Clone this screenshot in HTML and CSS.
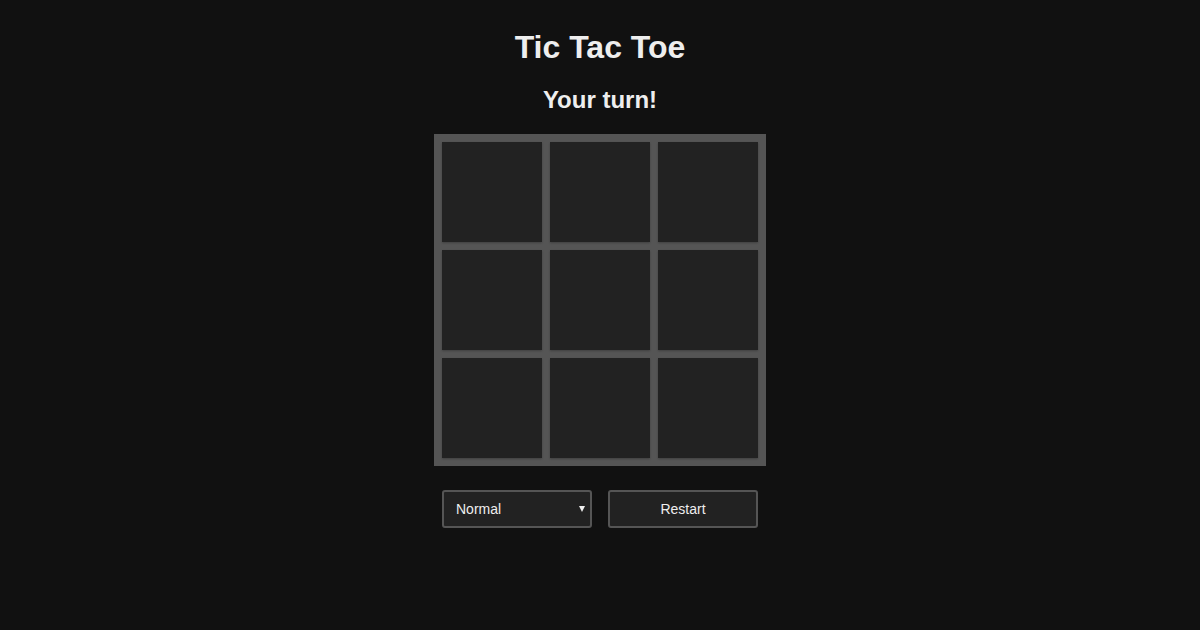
FILE: index.html
```html
<!DOCTYPE html>
<html lang="en">
<head>
<meta charset="utf-8">
<title>Tic Tac Toe</title>
<link rel="stylesheet" href="styles.css">
</head>
<body>
<main class="app">
  <h1 class="title">Tic Tac Toe</h1>
  <h2 class="status">Your turn!</h2>
  <div class="board">
    <button class="cell"></button>
    <button class="cell"></button>
    <button class="cell"></button>
    <button class="cell"></button>
    <button class="cell"></button>
    <button class="cell"></button>
    <button class="cell"></button>
    <button class="cell"></button>
    <button class="cell"></button>
  </div>
  <div class="controls">
    <div class="select-wrap">
      <select class="difficulty">
        <option>Easy</option>
        <option selected>Normal</option>
        <option>Hard</option>
      </select>
    </div>
    <button class="restart">Restart</button>
  </div>
</main>
</body>
</html>
```

FILE: styles.css
```css
html, body {
  margin: 0;
  padding: 0;
  background: #111111;
  color: #eeeeee;
  font-family: "Liberation Sans", Arial, sans-serif;
}

.app {
  display: flex;
  flex-direction: column;
  align-items: center;
}

.title {
  font-size: 32px;
  line-height: 37px;
  font-weight: bold;
  margin: 29px 0 0;
}

.status {
  font-size: 24px;
  line-height: 28px;
  font-weight: bold;
  margin: 20px 0 20px;
}

.board {
  display: grid;
  grid-template-columns: repeat(3, 100px);
  grid-template-rows: repeat(3, 100px);
  gap: 8px;
  padding: 8px;
  background: #555555;
}

.cell {
  width: 100px;
  height: 100px;
  border: none;
  padding: 0;
  background: #222222;
  box-shadow: 0 1px 2px rgba(0, 0, 0, 0.25);
}

.controls {
  display: flex;
  gap: 16px;
  margin-top: 24px;
}

.select-wrap {
  position: relative;
}

.select-wrap::after {
  content: "";
  position: absolute;
  right: 7px;
  top: 16px;
  border-left: 3.5px solid transparent;
  border-right: 3.5px solid transparent;
  border-top: 6px solid #eeeeee;
  pointer-events: none;
}

.difficulty {
  appearance: none;
  -webkit-appearance: none;
  width: 150px;
  height: 38px;
  padding: 0 0 0 12px;
  background: #222222;
  color: #eeeeee;
  border: 2px solid #555555;
  border-radius: 3px;
  font-family: "Liberation Sans", Arial, sans-serif;
  font-size: 14px;
  outline: none;
}

.restart {
  width: 150px;
  height: 38px;
  background: #222222;
  color: #eeeeee;
  border: 2px solid #555555;
  border-radius: 3px;
  font-family: "Liberation Sans", Arial, sans-serif;
  font-size: 14px;
  padding: 0;
}
```
